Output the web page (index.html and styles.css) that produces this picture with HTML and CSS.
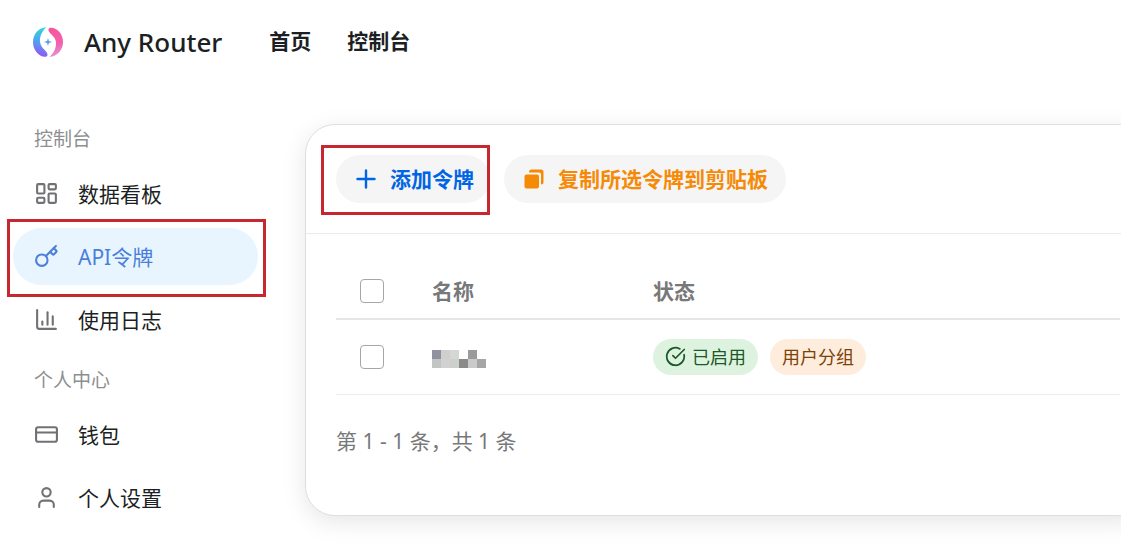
FILE: index.html
```html
<!DOCTYPE html>
<html lang="zh-CN">
<head>
<meta charset="utf-8">
<title>Any Router</title>
<link rel="stylesheet" href="styles.css">
</head>
<body>
<header class="header">
  <a class="brand" href="#">
    <svg class="logo" viewBox="0 0 30 30" aria-hidden="true">
      <defs>
        <linearGradient id="cool" x1="0.6" y1="0" x2="0.4" y2="1">
          <stop offset="0" stop-color="#2fd9dc"/><stop offset="0.5" stop-color="#4fa4f0"/><stop offset="1" stop-color="#9a4df5"/>
        </linearGradient>
        <linearGradient id="warm" x1="0.4" y1="0" x2="0.6" y2="1">
          <stop offset="0" stop-color="#f8559a"/><stop offset="0.6" stop-color="#f062ac"/><stop offset="1" stop-color="#e796e0"/>
        </linearGradient>
      </defs>
      <path fill="url(#cool)" d="M13.500 0.200C5.500 0.500 0 7 0 15c0 8 5.500 14.500 12 14.800 2.500 0 3.200-1.800 1.800-4.300C12 22.500 7.500 20.500 7 14.500 6.700 8.500 9.500 3.500 13.500 0.200z"/>
      <path fill="url(#warm)" d="M16.500 29.800C24.500 29.500 30 23 30 15S24.500 1 18 0.800c-2.500 0-3.200 1.800-1.800 4.200C18 8 22.500 9.500 23 15.500c0.300 6-2.500 11-6.500 14.300z"/>
      <path fill="#5b9be6" d="M15 11l0.900 3.100L19 15l-3.100 0.900L15 19l-0.900-3.100L11 15l3.100-0.900z"/>
    </svg>
    <span class="brand-name">Any Router</span>
  </a>
  <nav class="topnav">
    <a href="#">首页</a>
    <a href="#">控制台</a>
  </nav>
</header>

<div class="layout">
  <aside class="sidebar">
    <h2 class="group">控制台</h2>
    <nav class="menu">
      <a class="item" href="#">
        <svg class="icon" viewBox="0 0 24 24" aria-hidden="true"><rect x="3" y="3" width="7" height="9" rx="1"/><rect x="14" y="3" width="7" height="5" rx="1"/><rect x="14" y="12" width="7" height="9" rx="1"/><rect x="3" y="16" width="7" height="5" rx="1"/></svg>
        数据看板
      </a>
      <a class="item active" href="#" aria-current="page">
        <svg class="icon" viewBox="0 0 24 24" aria-hidden="true"><path d="m15.500 7.500 2.300 2.300a1 1 0 0 0 1.400 0l2.100-2.100a1 1 0 0 0 0-1.400L19 4"/><path d="m21 2-9.600 9.600"/><circle cx="7.500" cy="15.500" r="5.500"/></svg>
        API令牌
        <span class="mark"></span>
      </a>
      <a class="item" href="#">
        <svg class="icon" viewBox="0 0 24 24" aria-hidden="true"><path d="M3 3v16a2 2 0 0 0 2 2h16"/><path d="M18 17V9"/><path d="M13 17V5"/><path d="M8 17v-3"/></svg>
        使用日志
      </a>
    </nav>
    <h2 class="group">个人中心</h2>
    <nav class="menu">
      <a class="item" href="#">
        <svg class="icon" viewBox="0 0 24 24" aria-hidden="true"><rect x="2" y="5" width="20" height="14" rx="2"/><path d="M2 10h20"/></svg>
        钱包
      </a>
      <a class="item" href="#">
        <svg class="icon" viewBox="0 0 24 24" aria-hidden="true"><path d="M19 21v-2a4 4 0 0 0-4-4H9a4 4 0 0 0-4 4v2"/><circle cx="12" cy="7" r="4"/></svg>
        个人设置
      </a>
    </nav>
  </aside>

  <main class="card">
    <div class="toolbar">
      <button class="btn add" type="button">
        <svg class="btn-icon" viewBox="0 0 20 20" aria-hidden="true"><path d="M10 1.500v17M1.500 10h17" stroke="currentColor" stroke-width="2.400" stroke-linecap="round"/></svg>
        添加令牌
        <span class="mark"></span>
      </button>
      <button class="btn copy" type="button">
        <svg class="btn-icon" viewBox="0 0 20 20" aria-hidden="true"><rect x="0.500" y="5.500" width="14.500" height="14" rx="2" fill="currentColor"/><path fill="currentColor" d="M5 3.500V3a2.500 2.500 0 0 1 2.500-2.500h9.500A2.500 2.500 0 0 1 19.500 3v10a2.500 2.500 0 0 1-2.500 2.500V5.500a2 2 0 0 0-2-2z"/></svg>
        复制所选令牌到剪贴板
      </button>
    </div>
    <div class="content">
      <table class="tokens">
        <colgroup><col class="col-check"><col class="col-name"><col></colgroup>
        <thead>
          <tr><th><input class="check" type="checkbox" aria-label="全选"></th><th>名称</th><th>状态</th></tr>
        </thead>
        <tbody>
          <tr>
            <td><input class="check" type="checkbox" aria-label="选择"></td>
            <td>
              <svg class="masked" viewBox="0 0 6 2" shape-rendering="crispEdges" aria-hidden="true">
                <path fill="#9092a0" d="M0 0h1v1H0z"/><path fill="#d0cecf" d="M1 0h1v1H1z"/><path fill="#d5d7d4" d="M2 0h1v1H2z"/><path fill="#9b9b9b" d="M4 0h1v1H4z"/>
                <path fill="#c3c4c4" d="M0 1h1v1H0z"/><path fill="#d2d0d0" d="M1 1h1v1H1z"/><path fill="#ccd0cd" d="M2 1h1v1H2z"/><path fill="#8a8a8a" d="M3 1h1v1H3z"/><path fill="#cacaca" d="M4 1h1v1H4z"/><path fill="#a6a6a6" d="M5 1h1v1H5z"/>
              </svg>
            </td>
            <td>
              <div class="tags">
                <span class="tag green"><svg class="tag-icon" viewBox="0 0 24 24" aria-hidden="true"><path d="M21.800 10A10 10 0 1 1 17 3.340"/><path d="m9 11 3 3L22 4"/></svg>已启用</span>
                <span class="tag orange">用户分组</span>
              </div>
            </td>
          </tr>
        </tbody>
      </table>
      <p class="summary">第 1 - 1 条，共 1 条</p>
    </div>
  </main>
</div>
</body>
</html>
```
FILE: styles.css
```css
* { box-sizing: border-box; }

body {
  margin: 0;
  background: #fff;
  color: #1c1f23;
  font: 21px/30px "Noto Sans", "Noto Sans CJK SC", sans-serif;
  overflow: hidden;
}

a { color: inherit; text-decoration: none; }

.header {
  display: flex;
  align-items: center;
  gap: 47px;
  height: 84px;
  padding: 0 33px;
}
.brand { display: flex; align-items: center; gap: 21px; }
.logo { width: 30px; height: 30px; }
.brand-name { font-size: 26px; font-weight: 500; }
.topnav { display: flex; gap: 36px; padding-bottom: 2px; font-weight: 700; }

.layout { display: flex; align-items: flex-start; }

.sidebar { flex: 0 0 305px; padding: 41px 47px 0 13px; }
.group {
  margin: 0;
  padding: 0 21px;
  color: #8d8f92;
  font-size: 19px;
  line-height: 28px;
  font-weight: 400;
}
.menu { display: flex; flex-direction: column; gap: 6px; padding: 12px 0 18px; }
.item {
  position: relative;
  display: flex;
  align-items: center;
  gap: 19px;
  height: 57px;
  padding: 0 21px;
  border-radius: 29px;
}
.icon {
  width: 25px;
  height: 25px;
  fill: none;
  stroke: #6f7174;
  stroke-width: 2;
  stroke-linecap: round;
  stroke-linejoin: round;
}
.active { background: #e8f5ff; color: #4a80d9; }
.active .icon { stroke: #4a80d9; }

.mark { position: absolute; border: 3px solid #c7282f; }
.item .mark { inset: -9px -8px -12px -6px; }
.add .mark { inset: -10px 0 -12px -15px; }

.card {
  flex: 1;
  margin: 40px -30px 0 0;
  padding-right: 30px;
  border: 1px solid #dfdfdf;
  border-radius: 30px;
  background: #fff;
  box-shadow: 0 6px 24px rgba(0, 0, 0, 0.1);
}
.toolbar {
  display: flex;
  gap: 14px;
  margin-right: -30px;
  padding: 30px;
  border-bottom: 1px solid #ebebeb;
}
.btn {
  position: relative;
  display: flex;
  align-items: center;
  gap: 14px;
  height: 48px;
  padding: 0 18px 0 20px;
  border: 0;
  border-radius: 24px;
  background: #f5f5f5;
  font: inherit;
  font-weight: 700;
}
.btn-icon { width: 20px; height: 20px; fill: none; }
.add { padding-right: 16px; color: #0064e6; }
.copy { color: #f58a07; }

.content { padding: 30px 0 59px 30px; }
.tokens { width: 100%; table-layout: fixed; border-collapse: collapse; }
.col-check { width: 72px; }
.col-name { width: 221px; }
.tokens th, .tokens td { padding: 0 0 0 24px; text-align: left; vertical-align: middle; }
.tokens th { height: 55px; border-bottom: 2px solid #e6e6e6; color: #77787a; font-weight: 700; }
.tokens td { height: 75px; border-bottom: 1px solid #ececec; }
.check {
  display: block;
  appearance: none;
  width: 24px;
  height: 24px;
  margin: 0;
  border: 1px solid #a5a6a8;
  border-radius: 4px;
  background: #fff;
}
.masked { display: block; width: 54px; height: 22px; padding-top: 4px; }
.tags { display: flex; gap: 12px; }
.tag {
  display: flex;
  align-items: center;
  gap: 6px;
  height: 36px;
  padding: 0 12px;
  border-radius: 18px;
  font-size: 18px;
}
.tag-icon {
  width: 21px;
  height: 21px;
  fill: none;
  stroke: currentColor;
  stroke-width: 2;
  stroke-linecap: round;
  stroke-linejoin: round;
}
.green { background: #def3df; color: #1b5928; }
.orange { background: #feecdc; color: #7d4109; }
.summary { margin: 31px 0 0; color: #77787a; }
```
